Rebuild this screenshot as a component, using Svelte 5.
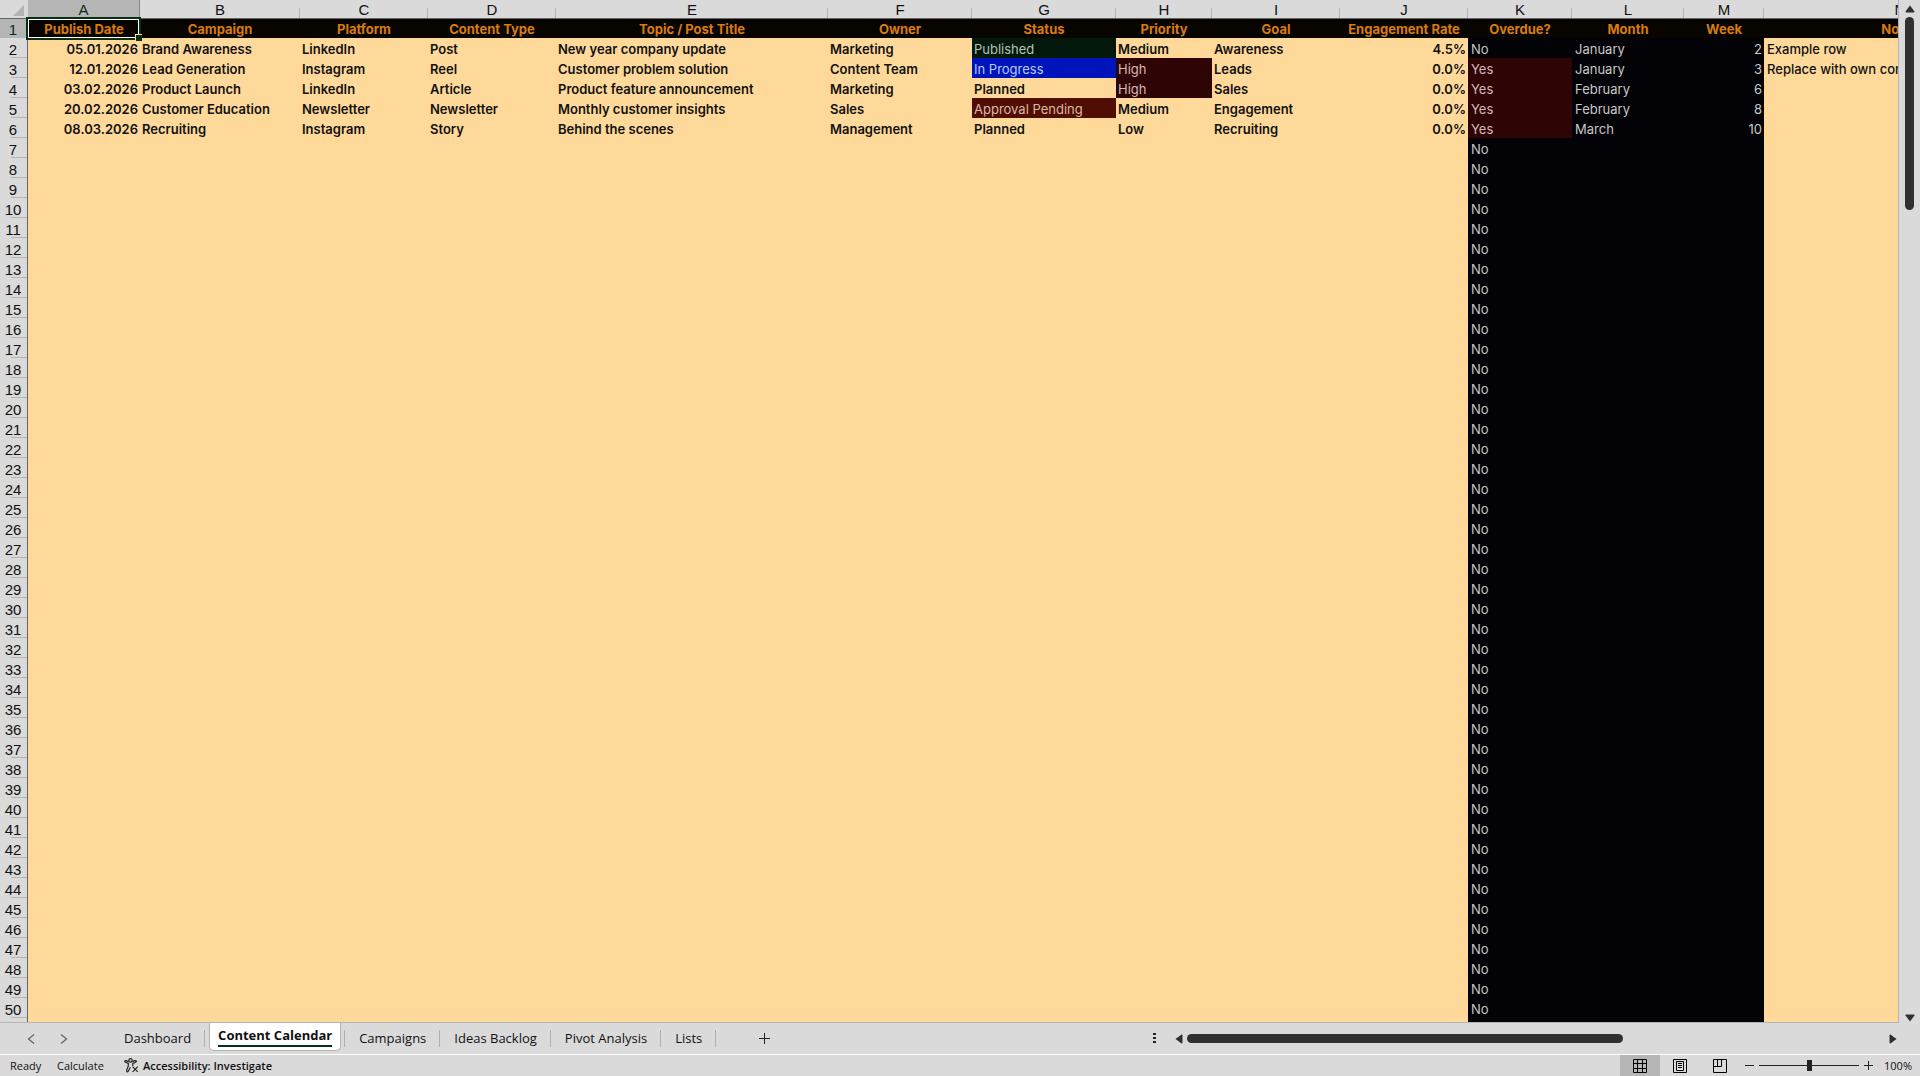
<script lang="ts">
	type Row = {
		date: string;
		campaign: string;
		platform: string;
		type: string;
		title: string;
		owner: string;
		status: string;
		priority: string;
		goal: string;
		rate: string;
		overdue: string;
		month: string;
		week: string;
		notes: string;
	};

	const columns = [
		{ letter: 'A', label: 'Publish Date', width: 112 },
		{ letter: 'B', label: 'Campaign', width: 160 },
		{ letter: 'C', label: 'Platform', width: 128 },
		{ letter: 'D', label: 'Content Type', width: 128 },
		{ letter: 'E', label: 'Topic / Post Title', width: 272 },
		{ letter: 'F', label: 'Owner', width: 144 },
		{ letter: 'G', label: 'Status', width: 144 },
		{ letter: 'H', label: 'Priority', width: 96 },
		{ letter: 'I', label: 'Goal', width: 128 },
		{ letter: 'J', label: 'Engagement Rate', width: 128 },
		{ letter: 'K', label: 'Overdue?', width: 104 },
		{ letter: 'L', label: 'Month', width: 112 },
		{ letter: 'M', label: 'Week', width: 80 },
		{ letter: 'N', label: 'Notes', width: 272 }
	];

	const entries: Row[] = [
		{ date: '05.01.2026', campaign: 'Brand Awareness', platform: 'LinkedIn', type: 'Post', title: 'New year company update', owner: 'Marketing', status: 'Published', priority: 'Medium', goal: 'Awareness', rate: '4.5%', overdue: 'No', month: 'January', week: '2', notes: 'Example row' },
		{ date: '12.01.2026', campaign: 'Lead Generation', platform: 'Instagram', type: 'Reel', title: 'Customer problem solution', owner: 'Content Team', status: 'In Progress', priority: 'High', goal: 'Leads', rate: '0.0%', overdue: 'Yes', month: 'January', week: '3', notes: 'Replace with own content' },
		{ date: '03.02.2026', campaign: 'Product Launch', platform: 'LinkedIn', type: 'Article', title: 'Product feature announcement', owner: 'Marketing', status: 'Planned', priority: 'High', goal: 'Sales', rate: '0.0%', overdue: 'Yes', month: 'February', week: '6', notes: '' },
		{ date: '20.02.2026', campaign: 'Customer Education', platform: 'Newsletter', type: 'Newsletter', title: 'Monthly customer insights', owner: 'Sales', status: 'Approval Pending', priority: 'Medium', goal: 'Engagement', rate: '0.0%', overdue: 'Yes', month: 'February', week: '8', notes: '' },
		{ date: '08.03.2026', campaign: 'Recruiting', platform: 'Instagram', type: 'Story', title: 'Behind the scenes', owner: 'Management', status: 'Planned', priority: 'Low', goal: 'Recruiting', rate: '0.0%', overdue: 'Yes', month: 'March', week: '10', notes: '' }
	];

	const statusClass: Record<string, string> = {
		Published: 'published',
		'In Progress': 'progress',
		'Approval Pending': 'pending'
	};

	// empty rows still carry the Overdue? formula
	const emptyRows = Array.from({ length: 44 }, (_, i) => i + 7);

	const sheets = ['Dashboard', 'Content Calendar', 'Campaigns', 'Ideas Backlog', 'Pivot Analysis', 'Lists'];
	let active = $state('Content Calendar');
	let view = $state('normal');
	let zoom = $state(100);
</script>

<svelte:head>
	<title>Content Calendar</title>
</svelte:head>

<div class="app">
	<div class="work">
		<div class="sheet">
			<table>
				<colgroup>
					<col style="width: 28px" />
					{#each columns as col}
						<col style="width: {col.width}px" />
					{/each}
				</colgroup>
				<thead>
					<tr>
						<th class="corner" aria-label="Select all">
							<svg width="11" height="11" viewBox="0 0 11 11"><path d="M11 0v11H0z" fill="#b4b4b4" /></svg>
						</th>
						{#each columns as col}
							<th class="letter" class:selected={col.letter === 'A'} scope="col">{col.letter}</th>
						{/each}
					</tr>
				</thead>
				<tbody>
					<tr class="titles">
						<th class="num selected" scope="row">1</th>
						{#each columns as col, i}
							<td class:cursor={i === 0}>{col.label}</td>
						{/each}
					</tr>
					{#each entries as row, i}
						<tr>
							<th class="num" scope="row">{i + 2}</th>
							<td class="right">{row.date}</td>
							<td>{row.campaign}</td>
							<td>{row.platform}</td>
							<td>{row.type}</td>
							<td>{row.title}</td>
							<td>{row.owner}</td>
							<td class={statusClass[row.status] ?? ''}>{row.status}</td>
							<td class:high={row.priority === 'High'}>{row.priority}</td>
							<td>{row.goal}</td>
							<td class="right">{row.rate}</td>
							<td class="dark" class:late={row.overdue === 'Yes'}>{row.overdue}</td>
							<td class="dark">{row.month}</td>
							<td class="dark right">{row.week}</td>
							<td class="notes">{row.notes}</td>
						</tr>
					{/each}
					{#each emptyRows as n}
						<tr>
							<th class="num" scope="row">{n}</th>
							<td colspan="10"></td>
							<td class="dark">No</td>
							<td class="dark"></td>
							<td class="dark"></td>
							<td></td>
						</tr>
					{/each}
					<tr>
						<th class="num" aria-label="51"></th>
						<td colspan="10"></td>
						<td class="dark"></td>
						<td class="dark"></td>
						<td class="dark"></td>
						<td></td>
					</tr>
				</tbody>
			</table>
		</div>

		<div class="vscroll">
			<button type="button" aria-label="Scroll up">
				<svg width="10" height="8" viewBox="0 0 10 8"><path d="M5 0.5 9.5 6.5Q9.6 7.5 8.6 7.5H1.4Q.4 7.5.5 6.5z" fill="#303030" /></svg>
			</button>
			<div class="vtrack"><div class="vthumb"></div></div>
			<button type="button" aria-label="Scroll down">
				<svg width="10" height="8" viewBox="0 0 10 8"><path d="M5 7.5 9.5 1.5Q9.6.5 8.6.5H1.4Q.4.5.5 1.5z" fill="#303030" /></svg>
			</button>
		</div>
	</div>

	<nav class="tabs" aria-label="Sheets">
		<div class="arrows">
			<button type="button" aria-label="Previous sheet">
				<svg width="8" height="10" viewBox="0 0 8 10"><path d="M7 .5 1.5 5 7 9.5" fill="none" stroke="#666" stroke-width="1.3" /></svg>
			</button>
			<button type="button" aria-label="Next sheet">
				<svg width="8" height="10" viewBox="0 0 8 10"><path d="M1 .5 6.5 5 1 9.5" fill="none" stroke="#666" stroke-width="1.3" /></svg>
			</button>
		</div>
		{#each sheets as sheet}
			<button type="button" class="tab" class:active={sheet === active} onclick={() => (active = sheet)}>
				<span>{sheet}</span>
			</button>
		{/each}
		<button type="button" class="add" aria-label="New sheet">
			<svg width="13" height="13" viewBox="0 0 13 13"><path d="M6.5 1v11M1 6.5h11" stroke="#222" fill="none" /></svg>
		</button>

		<div class="hscroll">
			<svg class="grip" width="3" height="11" viewBox="0 0 3 11"><path d="M0 0h3v2H0zM0 4h3v2H0zM0 8h3v2H0z" fill="#222" /></svg>
			<button type="button" aria-label="Scroll left">
				<svg width="8" height="10" viewBox="0 0 8 10"><path d="M.5 5 6.5.5Q7.5.4 7.5 1.4V8.6Q7.5 9.6 6.5 9.5z" fill="#303030" /></svg>
			</button>
			<div class="htrack"><div class="hthumb"></div></div>
			<button type="button" aria-label="Scroll right">
				<svg width="8" height="10" viewBox="0 0 8 10"><path d="M7.5 5 1.5.5Q.5.4.5 1.4V8.6Q.5 9.6 1.5 9.5z" fill="#303030" /></svg>
			</button>
		</div>
	</nav>

	<footer class="status">
		<span class="ready">Ready</span>
		<span class="calc">Calculate</span>
		<button type="button" class="access">
			<svg width="15" height="15" viewBox="0 0 15 15" fill="none" stroke="#222" stroke-width="1.2">
				<circle cx="6.5" cy="2.4" r="1.7" />
				<path d="M4.6 3.6 2 2.6Q.8 2.4.7 3.4.7 4 1.5 4.3L4.3 5.5V8L2.6 12.6Q2.5 13.8 3.4 13.9 4 13.9 4.4 13L6.4 9.3M8.4 3.6 11 2.6Q12.2 2.4 12.4 3.4 12.3 4 11.5 4.3L8.8 5.5V8" />
				<path d="M8.6 8.6 13.8 13.8M13.8 8.6 8.6 13.8" />
			</svg>
			Accessibility: Investigate
		</button>

		<div class="views">
			<button type="button" aria-label="Normal view" class:on={view === 'normal'} onclick={() => (view = 'normal')}>
				<svg width="14" height="14" viewBox="0 0 14 14" fill="none" stroke="#000"><path d="M.5 .5h13v13H.5zM.5 4.5h13M.5 9.5h13M4.5 .5v13M9.5 .5v13" /></svg>
			</button>
			<button type="button" aria-label="Page layout" class:on={view === 'layout'} onclick={() => (view = 'layout')}>
				<svg width="14" height="14" viewBox="0 0 14 14" fill="none" stroke="#000"><path d="M.5 .5h13v13H.5zM3.5 2.5h7v9h-7zM5 4.5h4M5 6.5h4M5 8.5h4" /></svg>
			</button>
			<button type="button" aria-label="Page break preview" class:on={view === 'break'} onclick={() => (view = 'break')}>
				<svg width="14" height="14" viewBox="0 0 14 14" fill="none" stroke="#000"><path d="M.5 .5h13v13H.5zM.5 7.5h8v-7M4.5 .5v7" /></svg>
			</button>
		</div>
		<div class="zoom">
			<button type="button" aria-label="Zoom out" onclick={() => (zoom -= 10)}>
				<svg width="9" height="9" viewBox="0 0 9 9"><path d="M0 4.5h9" stroke="#222" /></svg>
			</button>
			<input type="range" min="0" max="200" bind:value={zoom} aria-label="Zoom" />
			<button type="button" aria-label="Zoom in" onclick={() => (zoom += 10)}>
				<svg width="9" height="9" viewBox="0 0 9 9"><path d="M0 4.5h9M4.5 0v9" stroke="#222" /></svg>
			</button>
			<span class="percent">{zoom}%</span>
		</div>
	</footer>
</div>

<style>
	:global(body) {
		margin: 0;
		background: #dadada;
	}

	:global(*) {
		box-sizing: border-box;
	}

	.app {
		height: 100vh;
		display: flex;
		flex-direction: column;
		background: #dadada;
		color: #111;
		font-family: 'Open Sans', 'Noto Sans', sans-serif;
		overflow: hidden;
	}

	button {
		border: none;
		background: transparent;
		padding: 0;
		margin: 0;
		font: inherit;
		color: inherit;
		display: flex;
		align-items: center;
		justify-content: center;
		cursor: pointer;
	}

	svg {
		display: block;
	}

	.work {
		flex: 1;
		min-height: 0;
		display: flex;
	}

	.sheet {
		flex: 1;
		min-width: 0;
		overflow: hidden;
		border-right: 1px solid #b4b4b4;
		border-bottom: 1px solid #b4b4b4;
	}

	table {
		width: 2036px;
		table-layout: fixed;
		border-collapse: separate;
		border-spacing: 0;
	}

	th,
	td {
		height: 20px;
		padding: 0;
		overflow: hidden;
		white-space: nowrap;
	}

	thead th {
		height: 19px;
		border-bottom: 1px solid #666;
		background: #dadada;
	}

	.corner svg {
		margin: 2px 4px 0 auto;
	}

	.letter,
	.num {
		font-family: 'Liberation Sans', Arial, sans-serif;
		font-size: 15px;
		font-weight: 400;
		line-height: 17px;
	}

	.letter {
		padding-top: 1px;
		background: linear-gradient(#b4b4b4, #b4b4b4) right bottom / 1px 10px no-repeat #dadada;
	}

	.letter.selected {
		background: #b5b5b5;
		border-right: 1px solid #888;
		color: #0b2e16;
	}

	.num {
		padding: 2px 1px 0 0;
		border-right: 1px solid #666;
		background: linear-gradient(#b4b4b4, #b4b4b4) right bottom / 16px 1px no-repeat #dadada;
	}

	.num.selected {
		background: #b5b5b5;
		color: #0b2e16;
	}

	td {
		padding: 2px 2px 0 2px;
		background: #ffd99a;
		font-family: Inter, sans-serif;
		font-size: 13px;
		font-weight: 600;
		line-height: 18px;
	}

	td.right {
		text-align: right;
	}

	td.notes {
		padding-left: 3px;
		font-weight: 500;
	}

	td.dark {
		padding-left: 3px;
		background: #030207;
		color: #c8c8c8;
		font-weight: 400;
	}

	td.late,
	td.high {
		background: #2e0404;
		color: #d8b8b8;
		font-weight: 400;
	}

	td.published {
		background: #02180b;
		color: #b4c4b8;
		font-weight: 400;
	}

	td.progress {
		background: #0014bc;
		color: #b8ccf4;
		font-weight: 400;
	}

	td.pending {
		background: #500e02;
		color: #dcb8a8;
		font-weight: 400;
	}

	.titles th,
	.titles td {
		height: 19px;
	}

	.titles td {
		padding: 1px 0 0;
		background: #080400;
		color: #d87c0c;
		font-weight: 700;
		text-align: center;
	}

	.titles .cursor {
		position: relative;
		overflow: visible;
	}

	/* selection frame and its fill handle */
	.cursor::before {
		content: '';
		position: absolute;
		inset: -2px -1px -2px -2px;
		border: 2px solid #0b2e16;
		outline: 1px solid #fff;
		outline-offset: -3px;
	}

	.cursor::after {
		content: '';
		position: absolute;
		right: -2px;
		bottom: -3px;
		width: 6px;
		height: 6px;
		border: 1px solid #ffd99a;
		border-right: 0;
		border-bottom: 0;
		background: #0b2e16;
	}

	.vscroll {
		width: 21px;
		padding: 4px 0 1px;
		display: flex;
		flex-direction: column;
	}

	.vscroll button {
		height: 9px;
	}

	.vtrack {
		flex: 1;
		padding: 4px 6px;
	}

	.vthumb {
		height: 19.5%;
		border-radius: 5px;
		background: #303030;
	}

	.tabs {
		height: 31px;
		display: flex;
		align-items: stretch;
		font-size: 13px;
	}

	.arrows {
		width: 110px;
		padding-left: 27px;
		display: flex;
		gap: 25px;
	}

	.tab {
		position: relative;
		padding: 0 14px 2px;
		white-space: nowrap;
	}

	.tab::after {
		content: '';
		position: absolute;
		right: 0;
		top: 7px;
		width: 1px;
		height: 17px;
		background: #b0b0b0;
	}

	.tab.active {
		height: 28px;
		margin: 0 4px;
		padding: 0 8px 2px;
		background: #fff;
		border: 1px solid #b4b4b4;
		border-top: none;
		border-radius: 0 0 5px 5px;
		font-weight: 700;
	}

	.tab.active span {
		line-height: 20px;
		border-bottom: 2px solid #0b2e16;
	}

	.tab.active::after {
		right: -5px;
	}

	.add {
		width: 96px;
	}

	.hscroll {
		width: 40%;
		margin-left: auto;
		padding: 0 23px 0 1px;
		display: flex;
		align-items: center;
	}

	.grip {
		margin-right: 19px;
	}

	.htrack {
		flex: 1;
		padding: 0 4px;
	}

	.hthumb {
		width: 62.5%;
		height: 9px;
		border-radius: 5px;
		background: #303030;
	}

	.status {
		height: 22px;
		border-top: 1px solid #fff;
		display: flex;
		align-items: stretch;
		font-size: 11px;
		line-height: 21px;
	}

	.ready {
		width: 57px;
		padding-left: 10px;
	}

	.calc {
		width: 67px;
	}

	.access {
		gap: 4px;
		font-weight: 600;
	}

	.views {
		margin-left: auto;
		display: flex;
	}

	.views button {
		width: 40px;
	}

	.views button.on {
		background: #b5b5b5;
	}

	.zoom {
		display: flex;
		align-items: center;
		padding: 0 8px 0 5px;
		gap: 5px;
	}

	input[type='range'] {
		width: 100px;
		height: 11px;
		margin: 0;
		appearance: none;
		background: linear-gradient(#222, #222) center / 100% 1px no-repeat;
	}

	input[type='range']::-webkit-slider-thumb {
		appearance: none;
		width: 5px;
		height: 11px;
		background: #222;
	}

	.percent {
		width: 34px;
		text-align: right;
	}
</style>
